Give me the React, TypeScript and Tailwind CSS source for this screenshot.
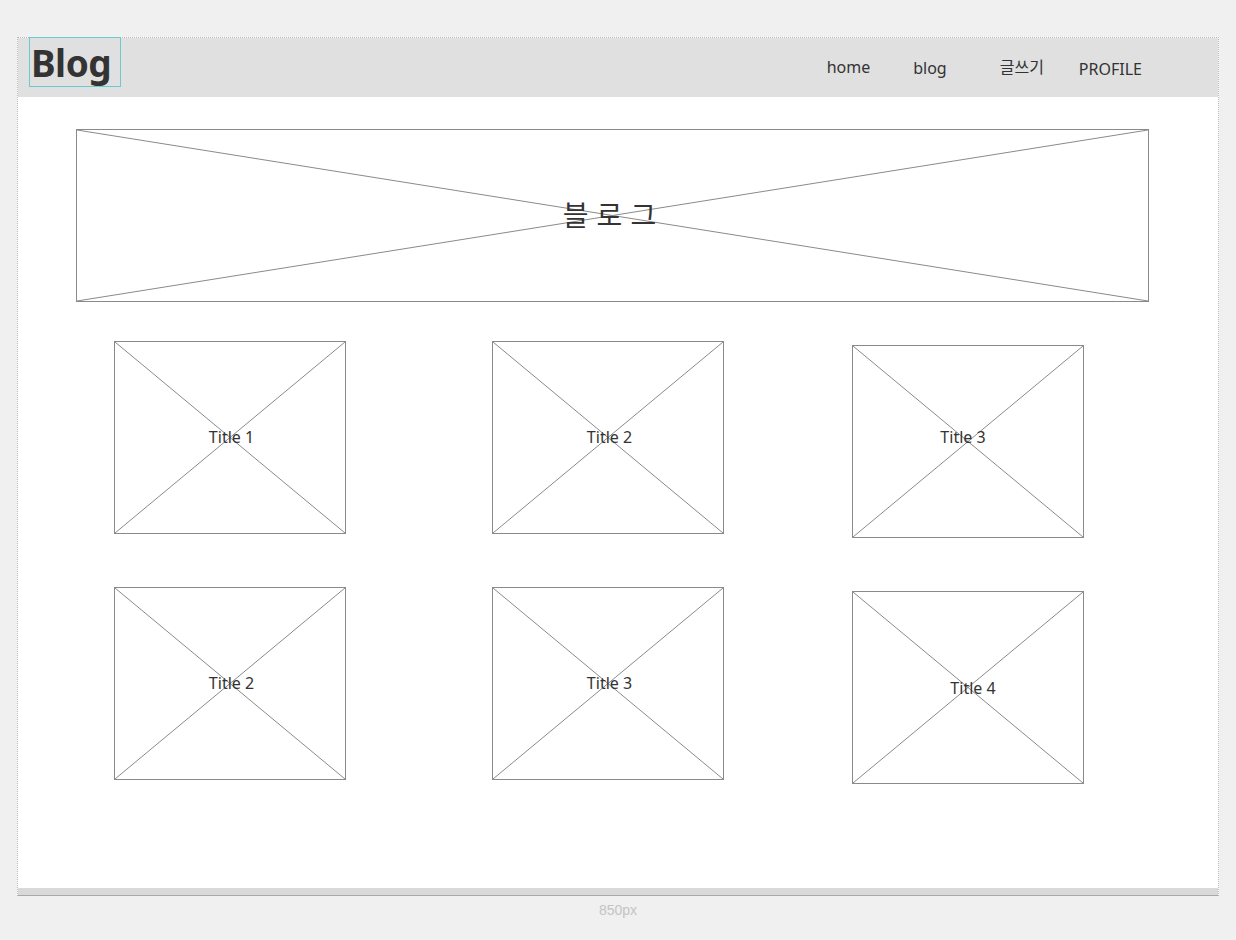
import React from 'react';

const FONT = "'Noto Sans', 'Noto Sans CJK KR', sans-serif";

function XBox({ label, className, labelClass }: { label: string; className?: string; labelClass?: string }) {
  return (
    <div className={`relative border border-[#8a8a8a] bg-white ${className ?? ''}`}>
      <svg className="absolute inset-0 h-full w-full" viewBox="0 0 100 100" preserveAspectRatio="none">
        <line x1="0" y1="0" x2="100" y2="100" stroke="#8a8a8a" strokeWidth="1" vectorEffect="non-scaling-stroke" />
        <line x1="100" y1="0" x2="0" y2="100" stroke="#8a8a8a" strokeWidth="1" vectorEffect="non-scaling-stroke" />
      </svg>
      <div className="absolute inset-0 flex items-center justify-center">
        <span className={labelClass ?? 'text-[16px] text-[#333] ml-[3px] mt-[-1px]'}>{label}</span>
      </div>
    </div>
  );
}

const CARD = 'h-[193px] w-[232px] shrink-0';

export default function App() {
  return (
    <div className="min-h-[940px] w-[1236px] bg-[#f0f0f0] pl-[17px] pt-[37px]" style={{ fontFamily: FONT }}>
      <div className="w-[1202px] border-x border-t border-dotted border-[#b8b8b8] bg-white">
        {/* header */}
        <div className="flex h-[59px] items-start bg-[#e0e0e0]">
          <div className="ml-[11px] mt-[-1px] flex h-[50px] w-[92px] items-center border border-[#6cc9cf] pl-[1px]">
            <span className="text-[37px] font-bold leading-none text-[#333] tracking-[-0.5px]">Blog</span>
          </div>
          <nav className="ml-auto mr-[76px] mt-[17px] flex items-start text-[16px] text-[#333]">
            <span className="mr-[43px]">home</span>
            <span className="mr-[53px] mt-[1px]">blog</span>
            <span className="mr-[35px]">글쓰기</span>
            <span className="mt-[2px]">PROFILE</span>
          </nav>
        </div>

        {/* content */}
        <div className="h-[791px] pt-[32px]">
          <XBox
            label="블로그"
            className="ml-[58px] h-[173px] w-[1073px]"
            labelClass="text-[28px] tracking-[8px] text-[#333] ml-[2px] mt-[-2px]"
          />

          <div className="mt-[39px] flex items-start">
            <XBox label="Title 1" className={`ml-[96px] ${CARD}`} />
            <XBox label="Title 2" className={`ml-[146px] ${CARD}`} />
            <XBox label="Title 3" className={`ml-[128px] mt-[4px] ${CARD}`} labelClass="text-[16px] text-[#333] ml-[-10px] mt-[-9px]" />
          </div>

          <div className="mt-[49px] flex items-start">
            <XBox label="Title 2" className={`ml-[96px] ${CARD}`} />
            <XBox label="Title 3" className={`ml-[146px] ${CARD}`} />
            <XBox label="Title 4" className={`ml-[128px] mt-[4px] ${CARD}`} labelClass="text-[16px] text-[#333] ml-[10px] mt-[1px]" />
          </div>
        </div>

        {/* bottom bar */}
        <div className="h-[8px] bg-[#d9d9d9] border-b border-[#a8a8a8]" />
      </div>
      <div className="w-[1202px] pt-[4px] text-center text-[14px] text-[#c4c4c4]" style={{ fontFamily: "'Liberation Sans', sans-serif" }}>
        850px
      </div>
    </div>
  );
}
